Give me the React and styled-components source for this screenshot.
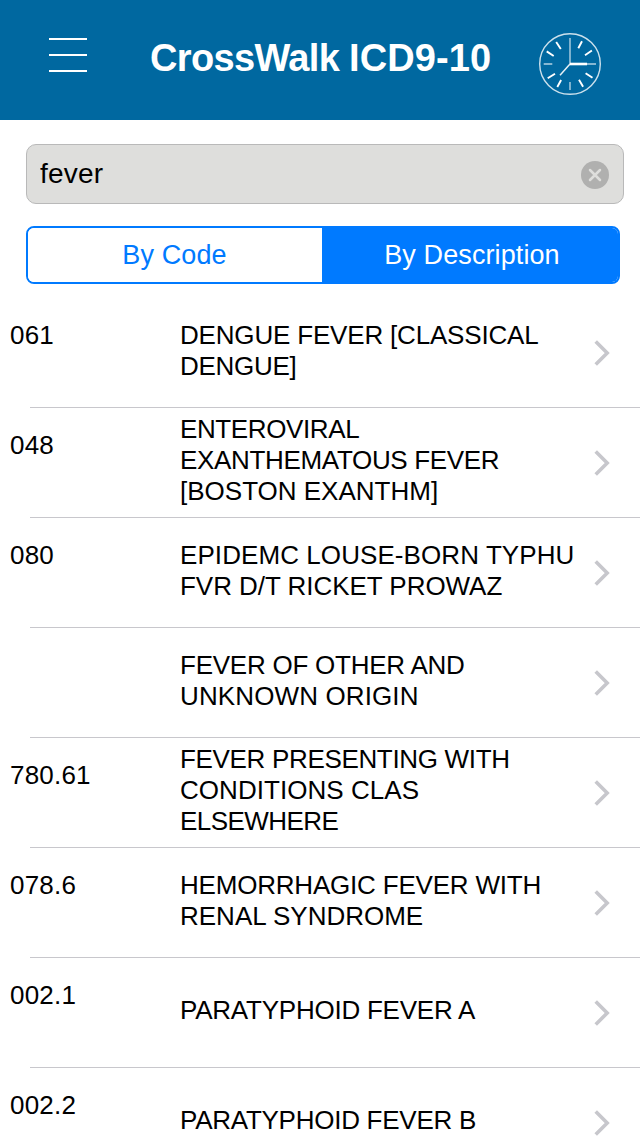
import React from "react";
import styled, { createGlobalStyle } from "styled-components";

const results = [
	{
		code: "061",
		lines: [
			{ text: "DENGUE FEVER [CLASSICAL", tracking: -0.18 },
			{ text: "DENGUE]", tracking: -0.3 }
		]
	},
	{
		code: "048",
		lines: [
			{ text: "ENTEROVIRAL", tracking: -0.38 },
			{ text: "EXANTHEMATOUS FEVER", tracking: -0.33 },
			{ text: "[BOSTON EXANTHM]" }
		]
	},
	{
		code: "080",
		lines: [
			{ text: "EPIDEMC LOUSE-BORN TYPHU", tracking: 0.08 },
			{ text: "FVR D/T RICKET PROWAZ", tracking: -0.04 }
		]
	},
	{
		code: "",
		lines: [
			{ text: "FEVER OF OTHER AND", tracking: -0.24 },
			{ text: "UNKNOWN ORIGIN", tracking: 0.12 }
		]
	},
	{
		code: "780.61",
		lines: [
			{ text: "FEVER PRESENTING WITH", tracking: -0.33 },
			{ text: "CONDITIONS CLAS", tracking: 0.05 },
			{ text: "ELSEWHERE", tracking: -0.55 }
		]
	},
	{
		code: "078.6",
		lines: [
			{ text: "HEMORRHAGIC FEVER WITH", tracking: -0.2 },
			{ text: "RENAL SYNDROME" }
		]
	},
	{ code: "002.1", lines: [{ text: "PARATYPHOID FEVER A", tracking: -0.23 }] },
	{ code: "002.2", lines: [{ text: "PARATYPHOID FEVER B", tracking: -0.26 }] }
];

const ClockIcon = () => (
	<svg width="64" height="64" viewBox="0 0 64 64" fill="none" stroke="#fff">
		<circle cx="32" cy="32" r="30.3" strokeWidth="1.4" opacity="0.8" />
		<path d="M32 6v26M58 32H32M5.700 32h8.600M32 50v8" strokeWidth="1.4" opacity="0.7" />
		<path d="M32 32h17" strokeWidth="2.6" />
		<path d="M32 32L22 43.300" strokeWidth="1.5" opacity="0.9" />
		<path
			d="M18.200 10.100l4.600 7M8.700 19.400l7 4.600M44 9.300l-3.700 7M53.900 18.500l-6.900 4.700M9.700 46.300l7.300-4.600M19.300 55l3.800-7M41 47.700l4.100 7M47.600 41.200l6.900 4.600"
			strokeWidth="1.9"
		/>
	</svg>
);

const ClearIcon = () => (
	<svg width="28" height="28" viewBox="0 0 28 28">
		<circle cx="14" cy="14" r="14" fill="#b0b0af" />
		<path
			d="M9 9l10 10M19 9L9 19"
			stroke="#dededc"
			strokeWidth="2.5"
			strokeLinecap="round"
		/>
	</svg>
);

const Chevron = () => (
	<svg width="18" height="28" viewBox="0 0 18 28" fill="none">
		<path d="M1.700 2.500L13.200 14L1.700 25.500" stroke="#c7c7cc" strokeWidth="3.6" />
	</svg>
);

const App = () => (
	<Screen>
		<GlobalStyle />
		<Header>
			<MenuButton aria-label="Menu">
				<MenuLine />
				<MenuLine />
				<MenuLine />
			</MenuButton>
			<Title>
				<Word $tracking={-0.65}>CrossWalk </Word>
				<Word $tracking={0.1}>ICD9-10</Word>
			</Title>
			<HistoryButton aria-label="History">
				<ClockIcon />
			</HistoryButton>
		</Header>
		<SearchBox>
			<SearchInput defaultValue="fever" aria-label="Search" />
			<ClearButton aria-label="Clear">
				<ClearIcon />
			</ClearButton>
		</SearchBox>
		<Segments>
			<Segment>By Code</Segment>
			<Segment $active>By Description</Segment>
		</Segments>
		<List>
			{results.map((row, key) => (
				<Row key={key}>
					<Code>{row.code}</Code>
					<Description>
						{row.lines.map(({ text, tracking }) => (
							<Line key={text} $tracking={tracking}>
								{text}
							</Line>
						))}
					</Description>
					<Arrow>
						<Chevron />
					</Arrow>
				</Row>
			))}
		</List>
	</Screen>
);

export default App;

const GlobalStyle = createGlobalStyle`
	* {
		box-sizing: border-box;
	}

	body {
		margin: 0;
		overflow: hidden;
		background: #fff;
	}

	button, input {
		margin: 0;
		padding: 0;
		border: 0;
		background: none;
		color: inherit;
		font: inherit;
	}
`;

const Screen = styled.div`
	display: flex;
	flex-direction: column;
	width: 640px;
	height: 1136px;
	overflow: hidden;
	background: #fff;
	color: #000;
	font-family: "Liberation Sans", Arial, sans-serif;
	font-size: 26px;
`;

const Header = styled.header`
	display: flex;
	flex-shrink: 0;
	align-items: flex-start;
	height: 120px;
	padding-left: 49px;
	background: #0068a0;
	color: #fff;
`;

const MenuButton = styled.button`
	display: flex;
	flex-direction: column;
	gap: 14px;
	width: 38px;
	margin-top: 38px;
`;

const MenuLine = styled.span`
	width: 38px;
	height: 2px;
	background: #fff;
`;

const Title = styled.h1`
	width: 360px;
	margin: 36px 0 0 63px;
	font-size: 38px;
	font-weight: 700;
	line-height: 44px;
	white-space: pre;
`;

const Word = styled.span`
	letter-spacing: ${props => props.$tracking}px;
`;

const HistoryButton = styled.button`
	display: flex;
	margin: 32px 0 0 28px;
`;

const SearchBox = styled.div`
	display: flex;
	flex-shrink: 0;
	align-items: center;
	width: 598px;
	height: 60px;
	margin: 24px 0 0 26px;
	padding: 0 14px 0 13px;
	border: 1px solid #b9b9b9;
	border-radius: 10px;
	background: #dededc;
`;

const SearchInput = styled.input`
	flex: 1;
	min-width: 0;
	height: 58px;
	outline: none;
	font-size: 28px;
	letter-spacing: 0.2px;
`;

const ClearButton = styled.button`
	display: flex;
	margin-top: 2px;
`;

const Segments = styled.div`
	display: flex;
	flex-shrink: 0;
	width: 594px;
	height: 58px;
	margin: 22px 0 0 26px;
	overflow: hidden;
	border: 2px solid #007aff;
	border-radius: 8px;
`;

const Segment = styled.button`
	width: ${props => (props.$active ? "296px" : "294px")};
	padding: ${props => (props.$active ? "0 0 0 4px" : "0 1px 0 0")};
	background: ${props => (props.$active ? "#007aff" : "#fff")};
	color: ${props => (props.$active ? "#fff" : "#007aff")};
	font-size: 27px;
	letter-spacing: 0.1px;
`;

const List = styled.ul`
	margin: 14px 0 0;
	padding: 0;
	list-style: none;
`;

const Row = styled.li`
	display: flex;
	height: 110px;
	background: linear-gradient(#c8c7cc, #c8c7cc) 30px 109px / 610px 1px no-repeat;
`;

const Code = styled.div`
	width: 180px;
	padding: 22px 0 0 10px;
	line-height: 31px;
	letter-spacing: 0.2px;
`;

const Description = styled.div`
	display: flex;
	flex-direction: column;
	justify-content: center;
	width: 413px;
	padding-bottom: 5px;
`;

const Line = styled.span`
	line-height: 31px;
	letter-spacing: ${props => props.$tracking || 0}px;
	white-space: nowrap;
`;

const Arrow = styled.div`
	display: flex;
	align-items: center;
	padding-left: 1px;
`;
